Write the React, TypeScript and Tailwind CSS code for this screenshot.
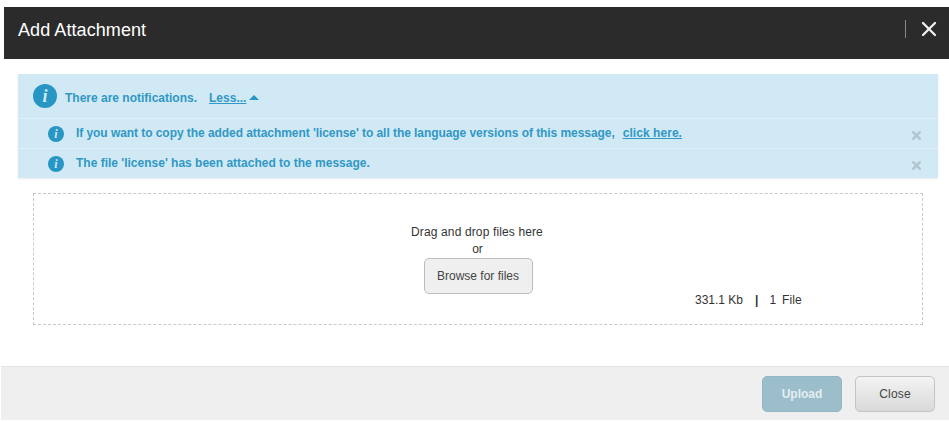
import { X } from "lucide-react";

function InfoIcon({ size, className }: { size: number; className?: string }) {
  return (
    <span
      className={`flex shrink-0 items-center justify-center rounded-full bg-[#2796c4] font-bold italic text-[#d1e9f4] ${className ?? ""}`}
      style={{ width: size, height: size }}
    >
      i
    </span>
  );
}

function NoticeRow({ children }: { children: React.ReactNode }) {
  return (
    <div className="flex h-[30px] items-center border-t border-[#dff0f8] pl-[30px] pr-[15px]">
      <InfoIcon size={16} className="font-['Liberation_Serif',serif] text-[12px]" />
      <p className="ml-[12px] flex-1 pb-[2px] text-[12px] font-bold text-[#3098c6]">{children}</p>
      <X size={13} strokeWidth={4.6} className="mt-[3px] text-[#b3c5ce]" />
    </div>
  );
}

export default function App() {
  return (
    <div className="flex h-[422px] w-[949px] flex-col overflow-hidden bg-white font-['Liberation_Sans',Arial,sans-serif]">
      <header className="ml-[4px] mt-[7px] flex h-[52px] items-center justify-between bg-[#2b2b2b] pl-[14px] pr-[8px]">
        <h1 className="pb-[6px] text-[18px] tracking-[0.08px] text-white">Add Attachment</h1>
        <div className="flex items-center gap-[11px] pb-[8px]">
          <span className="h-[18px] w-px bg-[#8a8a8a]" />
          <X size={24} strokeWidth={2.3} className="text-[#efefef]" />
        </div>
      </header>

      <section className="mx-[11px] ml-[18px] mt-[15px] bg-[#d1e9f4] shadow-[0_1px_2px_rgba(0,0,0,0.08)]">
        <div className="flex h-[44px] items-center pl-[15px] text-[12px] font-bold text-[#3098c6]">
          <InfoIcon size={24} className="font-['Liberation_Serif',serif] text-[18px]" />
          <span className="ml-[8px] pt-[3px]">There are notifications.</span>
          <a className="ml-[12px] pt-[3px] underline">Less...</a>
          <span className="ml-[3px] mt-[3px] h-0 w-0 border-x-[5px] border-b-[5px] border-x-transparent border-b-[#2796c4]" />
        </div>
        <NoticeRow>
          <span className="tracking-[-0.06px]">
            If you want to copy the added attachment 'license' to all the language versions of this message,
          </span>
          <a className="ml-[8px] underline tracking-[0.05px]">click here.</a>
        </NoticeRow>
        <NoticeRow>The file 'license' has been attached to the message.</NoticeRow>
      </section>

      <section className="relative ml-[33px] mt-[15px] flex h-[132px] w-[890px] flex-col items-center border border-dashed border-[#c9c9c9] pt-[31px] text-[12px] text-[#333333]">
        <div className="flex flex-col items-center">
          <p className="mr-[2px] leading-[15px] tracking-[0.13px]">Drag and drop files here</p>
          <p className="mr-[1px] leading-[18px]">or</p>
          <button className="h-[36px] w-[109px] rounded-[5px] border border-[#bdbdbd] bg-[#efefef] text-[#444444]">
            Browse for files
          </button>
        </div>
        <div className="absolute left-[661px] top-[99px] flex leading-[14px]">
          <span>331.1 Kb</span>
          <span className="ml-[12px] font-bold">|</span>
          <span className="ml-[11px]">1</span>
          <span className="ml-[6px] tracking-[0.1px]">File</span>
        </div>
      </section>

      <footer className="ml-[1px] mt-[41px] flex h-[54px] items-center justify-end gap-[13px] border-t border-[#e3e3e3] bg-[#efefef] pr-[14px] text-[12px]">
        <button className="h-[36px] w-[80px] rounded-[5px] border border-[#92b7c5] bg-[#9cbdca] font-bold text-[#e4eef2]">
          Upload
        </button>
        <button className="h-[36px] w-[80px] rounded-[5px] border border-[#c4c4c4] bg-gradient-to-b from-[#f3f3f3] to-[#d9d9d9] tracking-[0.2px] text-[#444444]">
          Close
        </button>
      </footer>
    </div>
  );
}
